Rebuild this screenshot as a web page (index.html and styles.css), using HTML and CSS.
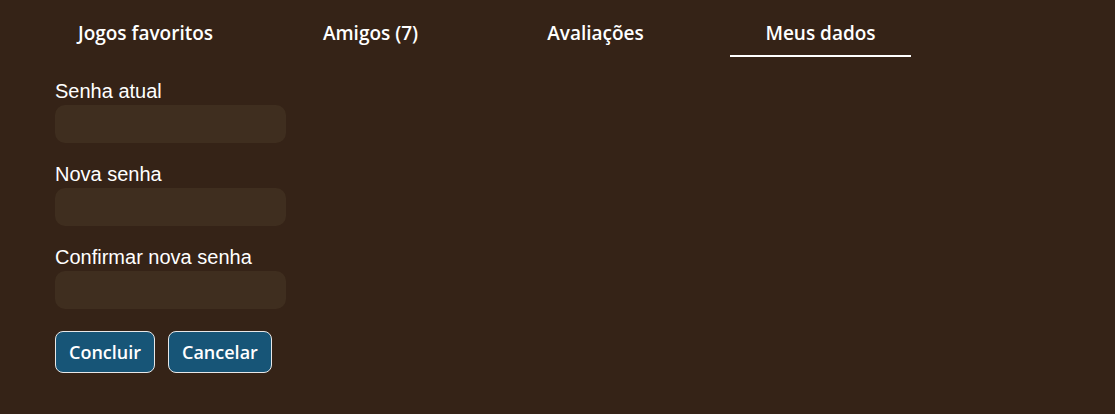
FILE: index.html
```html
<!DOCTYPE html>
<html lang="pt-BR">
<head>
<meta charset="utf-8">
<title>Meus dados</title>
<link rel="stylesheet" href="styles.css">
</head>
<body>
<div class="page">
  <nav class="tabs">
    <div class="tab">Jogos favoritos</div>
    <div class="tab">Amigos (7)</div>
    <div class="tab">Avaliações</div>
    <div class="tab active">Meus dados</div>
  </nav>
  <form class="form">
    <label class="field">
      <span class="label">Senha atual</span>
      <input class="input" type="password">
    </label>
    <label class="field">
      <span class="label">Nova senha</span>
      <input class="input" type="password">
    </label>
    <label class="field">
      <span class="label">Confirmar nova senha</span>
      <input class="input" type="password">
    </label>
    <div class="actions">
      <button type="button" class="btn">Concluir</button>
      <button type="button" class="btn">Cancelar</button>
    </div>
  </form>
</div>
</body>
</html>
```
FILE: styles.css
```css
html, body {
  margin: 0;
  padding: 0;
  background: #352317;
  height: 100%;
}
.page {
  padding: 0 55px;
  color: #fff;
}
.tabs {
  display: flex;
  gap: 44px;
  padding-top: 21px;
}
.tab {
  width: 181px;
  text-align: center;
  font-family: "Open Sans", sans-serif;
  font-weight: 600;
  font-size: 19px;
  line-height: 24px;
  padding-bottom: 10px;
  border-bottom: 2px solid transparent;
}
.tab.active {
  border-bottom-color: #ffffff;
}
.form {
  display: flex;
  flex-direction: column;
  padding-top: 23px;
}
.field {
  display: flex;
  flex-direction: column;
  margin-bottom: 20px;
}
.label {
  font-family: "Liberation Sans", Arial, sans-serif;
  font-size: 20px;
  line-height: 23px;
  margin-bottom: 2px;
}
.input {
  width: 231px;
  height: 38px;
  box-sizing: border-box;
  border: none;
  border-radius: 10px;
  background: #3f2e1f;
  outline: none;
  padding: 0 12px;
  color: #fff;
}
.actions {
  display: flex;
  gap: 13px;
  margin-top: 2px;
}
.btn {
  height: 42px;
  padding: 0 13px;
  background: #175577;
  color: #fff;
  border: 1px solid #e8e8e8;
  border-radius: 8px;
  font-family: "Open Sans", sans-serif;
  font-weight: 600;
  font-size: 18px;
}
```
